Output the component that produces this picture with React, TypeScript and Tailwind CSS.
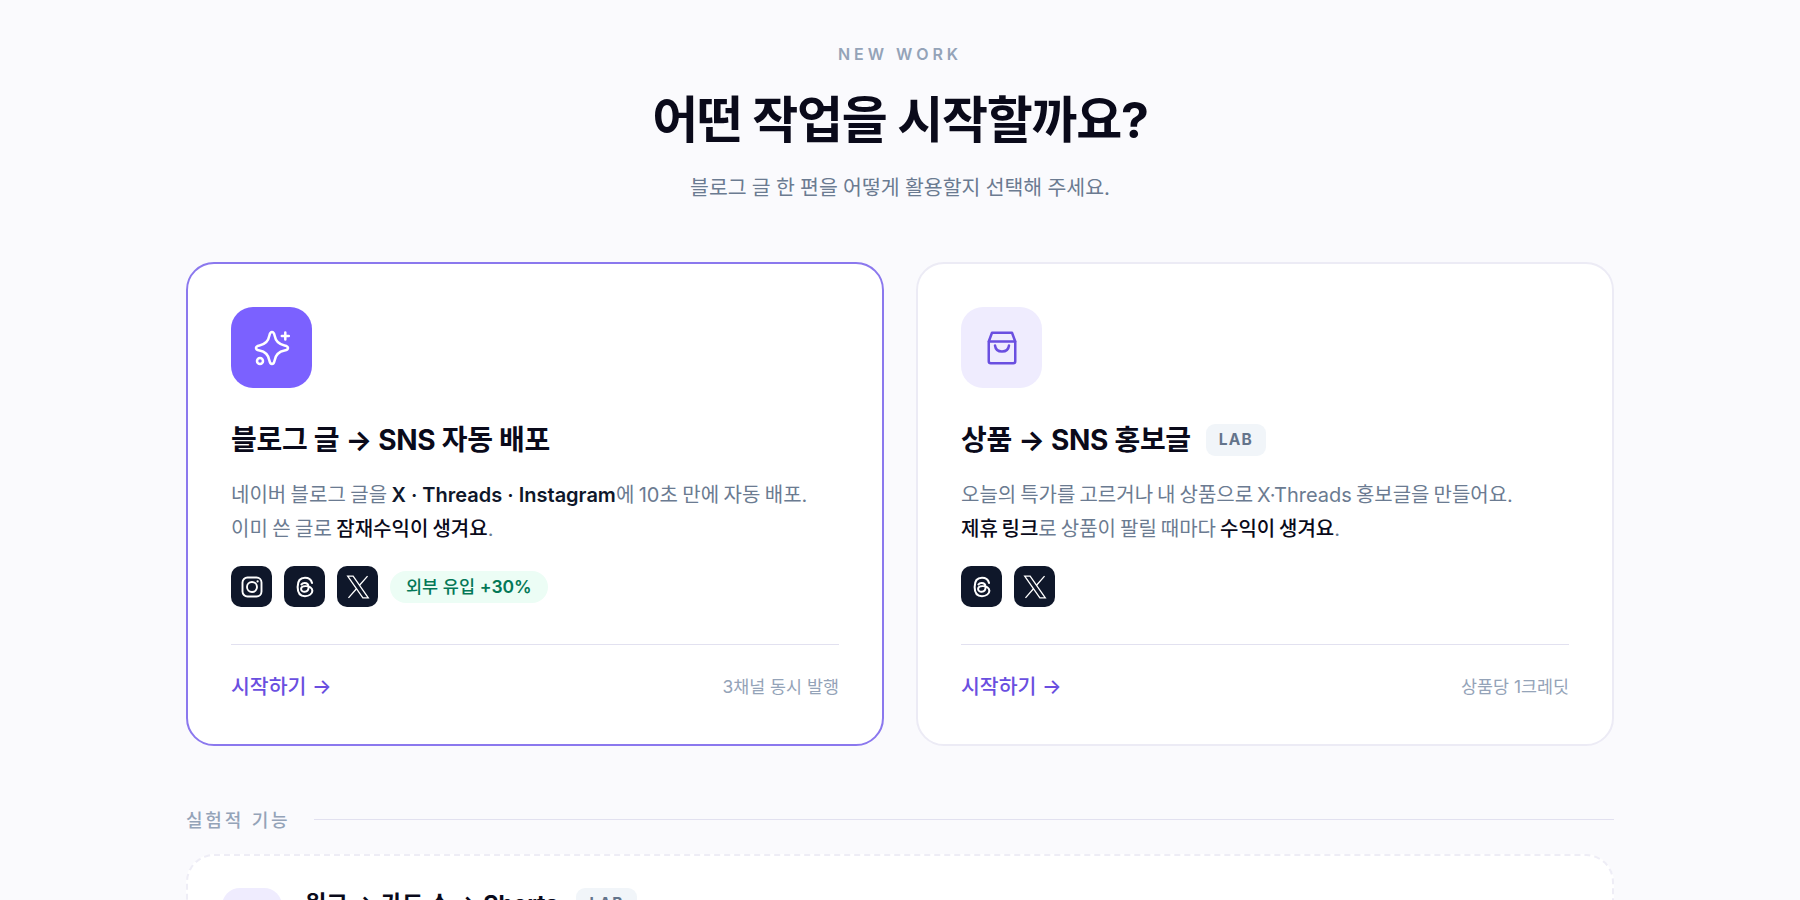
const font = 'font-["Inter","Noto_Sans_CJK_KR",sans-serif]';

function SparkIcon() {
  return (
    <svg width="50" height="50" viewBox="-25 -25 50 50" fill="none" stroke="white" strokeWidth="2.500" strokeLinecap="round" strokeLinejoin="round">
      <path d="M0-16C1.600-16 2.100-15 2.600-12.500C3.500-7.500 6-3.800 12.500-2.600C15-2.100 16-1.600 16 0C16 1.600 15 2.100 12.500 2.600C6 3.800 3.500 7.500 2.600 12.500C2.100 15 1.600 16 0 16C-1.600 16-2.100 15-2.600 12.500C-3.500 7.500-6 3.800-12.500 2.600C-15 2.100-16 1.600-16 0C-16-1.600-15-2.100-12.500-2.600C-6-3.800-3.500-7.500-2.600-12.500C-2.100-15-1.600-16 0-16Z" />
      <path d="M13.300-15.500v7M9.800-12h7" />
      <circle cx="-12" cy="13" r="3" />
    </svg>
  );
}

function InstagramIcon() {
  return (
    <svg width="24" height="24" viewBox="0 0 24 24" fill="none" stroke="white" strokeWidth="1.900">
      <rect x="2.500" y="2.500" width="19" height="19" rx="5" />
      <circle cx="12" cy="12" r="5" />
      <circle cx="17.600" cy="6.400" r="1.100" fill="white" stroke="none" />
    </svg>
  );
}

function ThreadsIcon() {
  return (
    <svg width="26" height="24" viewBox="0 0 24 24" preserveAspectRatio="none" fill="none" stroke="white" strokeWidth="1.900" strokeLinecap="round">
      <path d="M18.500 8C17.700 4.600 15.300 2.800 12 2.800 7.700 2.800 5.200 6.200 5.200 12s2.500 9.200 6.800 9.200c3.800 0 6.800-2.400 6.800-5.400 0-3.200-2.800-4.900-6.500-4.700-2.500.1-3.900 1.400-3.900 3 0 1.700 1.500 2.800 3.300 2.700 2.600-.1 3.700-2.100 3.600-4.700-.1-2.700-1.500-4.100-3.600-4.100-1.300 0-2.400.5-3 1.500" />
    </svg>
  );
}

function XIcon() {
  return (
    <svg width="26" height="26" viewBox="0 0 24 24" fill="none" stroke="white" strokeWidth="1.200" strokeLinejoin="miter">
      <path d="M2.500 2h5L21.500 22h-5z" />
      <path d="M20.800 2 13.200 10.600M10.800 13.400 3.200 22" />
    </svg>
  );
}

function BagIcon() {
  return (
    <svg width="50" height="50" viewBox="-25 -25 50 50" fill="none" stroke="#6a4fe0" strokeWidth="2.500" strokeLinecap="round" strokeLinejoin="round">
      <path d="M-10-15.250H10L13.250-6.500V13.250a2 2 0 0 1-2 2H-11.250a2 2 0 0 1-2-2V-6.500z" />
      <path d="M-13-6.500H13" />
      <path d="M-7-2.500c.5 4 3.300 6 7 6s6.500-2 7-6" />
    </svg>
  );
}

function SocialBadge({ children }: { children: React.ReactNode }) {
  return (
    <div className="flex h-[41px] w-[41px] items-center justify-center rounded-[10px] bg-[#0f172a]">
      {children}
    </div>
  );
}

function LabBadge() {
  return (
    <span className="rounded-[9px] bg-[#f1f5f9] px-[13px] py-1 text-[15.5px] leading-6 font-bold tracking-[1.2px] text-[#64748b]">
      LAB
    </span>
  );
}

function CardFooter({ note }: { note: string }) {
  return (
    <div className="mt-[37px] flex items-center justify-between border-t border-[#e2e1f0] pt-[28px]">
      <span className="text-[20.5px] leading-7 font-medium text-[#6a4fe0]">시작하기 →</span>
      <span className="text-[17.4px] leading-7 text-[#94a3b8]">{note}</span>
    </div>
  );
}

export default function App() {
  return (
    <div className={`h-[900px] overflow-hidden bg-[#fafafd] ${font}`}>
      <div className="mx-auto w-[1428px] pt-[44px]">
        <header className="flex flex-col items-center">
          <p className="text-base leading-5 font-semibold tracking-[4px] text-[#94a3b8]">NEW WORK</p>
          <h1 className="mt-[22px] text-[50px] leading-[68px] font-bold tracking-[-1.25px] text-[#0a0a1a]">
            어떤 작업을 시작할까요?
          </h1>
          <p className="mt-[18px] text-[20.5px] leading-8 [word-spacing:-0.5px] text-[#6b7b91]">
            블로그 글 한 편을 어떻게 활용할지 선택해 주세요.
          </p>
        </header>

        <div className="mt-[58px] grid grid-cols-2 gap-8">
          <section className="h-[484px] rounded-[28px] border-2 border-[#8b78ee] bg-white px-[43px] pt-[43px]">
            <div className="flex h-[81px] w-[81px] items-center justify-center rounded-[22px] bg-[#7b61ff]">
              <SparkIcon />
            </div>
            <h2 className="mt-[34px] text-[28px] leading-9 font-bold tracking-[-0.3px] text-[#0a0a1a]">
              블로그 글 → SNS 자동 배포
            </h2>
            <p className="mt-[20px] text-xl leading-[34px] [word-spacing:-1.2px] text-[#6b7b91]">
              네이버 블로그 글을 <b className="font-semibold [word-spacing:0] text-[#0f172a]">X · Threads · Instagram</b>에 10초 만에 자동 배포.
              <br />
              이미 쓴 글로 <b className="font-medium text-[#0a0a1a]">잠재수익이 생겨요</b>.
            </p>
            <div className="mt-[20px] flex items-center gap-3">
              <SocialBadge><InstagramIcon /></SocialBadge>
              <SocialBadge><ThreadsIcon /></SocialBadge>
              <SocialBadge><XIcon /></SocialBadge>
              <span className="rounded-full bg-[#ecfdf5] px-4 py-[3px] text-[17.5px] leading-[26px] font-medium text-[#047857]">
                외부 유입 <span className="font-semibold">+30%</span>
              </span>
            </div>
            <CardFooter note="3채널 동시 발행" />
          </section>

          <section className="h-[484px] rounded-[28px] border-2 border-[#ecebf5] bg-white px-[43px] pt-[43px]">
            <div className="flex h-[81px] w-[81px] items-center justify-center rounded-[22px] bg-[#efecfe]">
              <BagIcon />
            </div>
            <h2 className="mt-[34px] flex items-center gap-[15px] text-[28px] leading-9 font-bold tracking-[-0.3px] text-[#0a0a1a]">
              상품 → SNS 홍보글
              <LabBadge />
            </h2>
            <p className="mt-[20px] text-xl leading-[34px] [word-spacing:-1.6px] text-[#6b7b91]">
              오늘의 특가를 고르거나 내 상품으로 X·Threads 홍보글을 만들어요.
              <br />
              <b className="font-medium text-[#0a0a1a]">제휴 링크</b>로 상품이 팔릴 때마다 <b className="font-medium text-[#0a0a1a]">수익이 생겨요</b>.
            </p>
            <div className="mt-[20px] flex items-center gap-3">
              <SocialBadge><ThreadsIcon /></SocialBadge>
              <SocialBadge><XIcon /></SocialBadge>
            </div>
            <CardFooter note="상품당 1크레딧" />
          </section>
        </div>

        <div className="mt-[61px] flex items-center gap-6">
          <span className="pt-1 text-lg leading-5 font-medium tracking-[2.8px] text-[#94a3b8]">실험적 기능</span>
          <div className="h-px flex-1 bg-[#e2e1f0]" />
        </div>

        <section className="mt-[23px] flex h-[150px] gap-[23px] rounded-[28px] border-2 border-dashed border-[#eeedf6] bg-white pt-8 pl-[34px]">
          <div className="h-[60px] w-[60px] rounded-[18px] bg-[#efecfe]" />
          <h2 className="flex h-8 items-center gap-[18px] text-[23.2px] font-bold text-[#0a0a1a]">
            원고 → 카드 쇼 → Shorts
            <LabBadge />
          </h2>
        </section>
      </div>
    </div>
  );
}
